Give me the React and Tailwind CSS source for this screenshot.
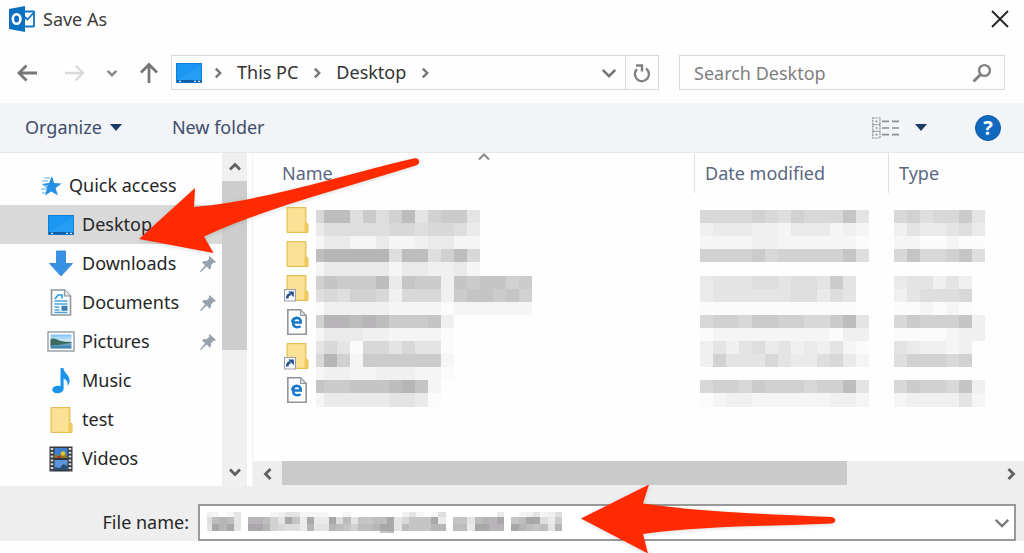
import React from "react";

const SHADES = {
  0: "#fbfbfb", 1: "#f5f5f5", 2: "#f0f0f0", 3: "#eaeaea", 4: "#e4e4e4", 5: "#dedede",
  6: "#d8d8d8", 7: "#d2d1d2", 8: "#cccbcc", 9: "#c6c5c6", a: "#bebdbe", b: "#b7b5b7", c: "#a9a7aa",
};

const NAME_CELLS = [
  "6aa5857a47884", "3555556656653", "1331131123311", "abbbbb5aa57a6", "1333331332231",
  "79888a39882989978", "56577626662899897", "02222211110111111", "7bbaba88892", "13332211110",
  "46406646440", "6b718888881", "12211222110", "988999ab91", "1333334430",
];
const DATE_CELLS = [
  "6666765766694", "2333221333121", "1111221111110", "7777867777795", ".............",
  "344455455484", "344444455354", "000000000000", "67768877668a4", "0111111111022",
  "2424534232410", "2744464335631", ".............", "67768777677a4", "0122111111221",
];
const TYPE_CELLS = [
  "6756684", "2433453", "1100100", "6966795", ".......",
  "344242", "245556", "001010", "6877792", "0000122",
  "432212", "577767", ".......", "6877692", "1222241",
];
const FILE_CELLS = [
  "21.14....12441111..1.......241.15.......3..124125",
  "5aba4.bba74c93c33c5a499aac46999c3.994abbc.9acc538",
  "4cbc4.ccb76553b44ba97aabcc4a999bb.aa3ccbb.cba9a4b",
  "........................9a",
];

function Mosaic({ rows, first, cell, tops, className, label }) {
  const cols = Math.max(...rows.map((r) => r.length));
  const width = first + (cols - 1) * cell;
  const height = tops[tops.length - 1];
  return (
    <svg width={width} height={height} viewBox={`0 0 ${width} ${height}`} className={className} role="img" aria-label={label} shapeRendering="crispEdges">
      {rows.map((row, r) =>
        [...row].map((c, i) =>
          c === "." ? null : (
            <rect
              key={`${r}-${i}`}
              x={i === 0 ? 0 : first + (i - 1) * cell}
              y={tops[r]}
              width={i === 0 ? first : cell}
              height={tops[r + 1] - tops[r]}
              fill={SHADES[c]}
            />
          )
        )
      )}
    </svg>
  );
}

const LIST_TOPS = Array.from({ length: 16 }, (_, i) => Math.round(i * 13.1));

function Chevron({ dir, size = 16, color = "#606060", width = 2.8, className = "" }) {
  const paths = {
    down: "M3 5.5 L8 10.5 L13 5.5",
    up: "M3 10.5 L8 5.5 L13 10.5",
    right: "M5.5 3 L10.5 8 L5.5 13",
    left: "M10.5 3 L5.5 8 L10.5 13",
  };
  return (
    <svg width={size} height={size} viewBox="0 0 16 16" fill="none" stroke={color} strokeWidth={width} className={`shrink-0 ${className}`} aria-hidden="true">
      <path d={paths[dir]} />
    </svg>
  );
}

const OutlookIcon = () => (
  <svg width="28" height="28" viewBox="0 0 28 28" aria-hidden="true">
    <rect x="14" y="6.5" width="12" height="15" rx="0.5" fill="#fff" stroke="#1273c4" strokeWidth="1.8" />
    <path d="M15 10.5 L19.5 14.5 L26 7.5" fill="none" stroke="#1273c4" strokeWidth="1.8" />
    <path d="M1 4 L17 1 V27 L1 24 Z" fill="#0b6fc2" />
    <ellipse cx="8.6" cy="14" rx="3.8" ry="4.8" fill="none" stroke="#fff" strokeWidth="2.6" />
  </svg>
);

const MonitorIcon = () => (
  <svg width="28" height="22" viewBox="0 0 28 22" aria-hidden="true">
    <rect x="1" y="1" width="26" height="20" fill="#1180d8" />
    <rect x="2" y="2" width="24" height="16" fill="#1a97f2" />
    <path d="M2 18 L26 4 V18 Z" fill="#2ba2f6" opacity="0.6" />
    <rect x="2" y="18" width="24" height="2.5" fill="#0b5fa8" />
    <path d="M4 19.3 H6 M19 19.3 H21 M23 19.3 H25" stroke="#d7ecfb" strokeWidth="1.2" />
  </svg>
);

const StarIcon = () => (
  <svg width="24" height="22" viewBox="0 0 24 22" aria-hidden="true">
    <path d="M14 1 L16 8 L23.5 8.5 L17.6 13 L20 20.5 L13.3 16.4 L7 20.5 L9 13 L4 9 L11 8 Z" fill="#2490e3" />
    <path d="M6 3 H12 M4 6 H10 M6 11 H10 M3 14 H9 M4 18 H8" stroke="#8fc9f4" strokeWidth="1.4" />
  </svg>
);

const DownloadIcon = () => (
  <svg width="26" height="27" viewBox="0 0 26 27" aria-hidden="true">
    <path d="M8.5 1 H17.5 V13.5 H24.5 L13 26 L1.5 13.5 H8.5 Z" fill="#3792e6" stroke="#2a7fd0" strokeWidth="0.8" />
  </svg>
);

const DocumentIcon = () => (
  <svg width="22" height="27" viewBox="0 0 22 27" aria-hidden="true">
    <path d="M1.5 1 H14.5 L20.5 7 V26 H1.5 Z" fill="#fbfcfd" stroke="#8f959b" strokeWidth="1.6" />
    <path d="M14.5 1 V7 H20.5" fill="#e3e6e9" stroke="#8f959b" strokeWidth="1.2" />
    <path d="M5 10 L8 6 H12 V9.5" fill="none" stroke="#2e9be0" strokeWidth="1.7" />
    <path d="M4.5 12 H17.5 M4.5 15 H17.5 M4.5 18 H9.5 M4.5 21 H9.5 M4.5 23.5 H17.5" stroke="#49a4dc" strokeWidth="1.4" />
    <rect x="11.5" y="16.8" width="6" height="5" fill="#3a7fb0" />
  </svg>
);

const PictureIcon = () => (
  <svg width="28" height="21" viewBox="0 0 28 21" aria-hidden="true">
    <defs>
      <linearGradient id="sky" x1="0" y1="0" x2="0" y2="1">
        <stop offset="0" stopColor="#7fc0f0" />
        <stop offset="1" stopColor="#e6f5fc" />
      </linearGradient>
      <linearGradient id="sea" x1="0" y1="0" x2="0" y2="1">
        <stop offset="0" stopColor="#8cc0d8" />
        <stop offset="1" stopColor="#2f74a6" />
      </linearGradient>
    </defs>
    <rect x="1" y="1" width="26" height="19" fill="#fff" stroke="#9aa4ab" strokeWidth="1.5" />
    <rect x="3.5" y="3.5" width="21" height="8" fill="url(#sky)" />
    <rect x="3.5" y="11" width="21" height="6.5" fill="url(#sea)" />
    <path d="M3.5 8 C7 6.5 10 8.5 13 9.8 C17 10.8 21 10.8 24.5 11 V12 C17 13 12 14 3.5 14.5 Z" fill="#3f6a5e" />
  </svg>
);

const MusicIcon = () => (
  <svg width="20" height="27" viewBox="0 0 20 27" aria-hidden="true">
    <path d="M9.5 1 H12.4 C12.8 6 19 8 18.6 14 C18.5 16 17.6 18 16.5 19 C17.3 15.5 16 13 12.6 11.6 V22 C12.4 25 8.5 26.6 5.5 26.3 C2.5 26 1 24 1.2 22.2 C1.6 19.5 6 18 9.5 19.2 Z" fill="#1a93ec" />
  </svg>
);

const FolderIcon = ({ shortcut }) => (
  <svg width="26" height="28" viewBox="0 0 26 28" aria-hidden="true">
    <path d="M3 1.5 H22 V16.5 L24 18 V26.5 H3 Z" fill="#f4d679" stroke="#e2bd55" strokeWidth="1" />
    <path d="M4 2.5 H20.5 V25.5 H4 Z" fill="#fae195" />
    <path d="M20.5 26 V18 L22 16.5 L24 18 V26 Z" fill="#f0ca5c" />
    {shortcut && (
      <g>
        <rect x="0.5" y="15.5" width="11" height="11.5" fill="#f7f8fa" stroke="#9a9fa8" strokeWidth="1" />
        <path d="M3.2 24.5 C3.2 21.5 4.5 20.5 6.6 20.3" fill="none" stroke="#23518f" strokeWidth="2.4" />
        <path d="M4.2 17.6 H9.8 V23.2 Z" fill="#23518f" />
      </g>
    )}
  </svg>
);

const WebFileIcon = () => (
  <svg width="26" height="28" viewBox="0 0 26 28" aria-hidden="true">
    <path d="M3.8 1.8 H16.5 L22.2 7.5 V26.2 H3.8 Z" fill="#fdfdfe" stroke="#90959b" strokeWidth="1.6" />
    <path d="M16.5 1.8 V7.5 H22.2 Z" fill="#dcdfe2" stroke="#90959b" strokeWidth="1" />
    <path d="M9.5 14.6 H16.8 C16.8 11.4 15 9.9 13 9.9 C10.6 9.9 9 11.8 9 14.6 C9 17.6 10.8 19.2 13.4 19.2 C14.6 19.2 15.7 18.9 16.6 18.3" fill="none" stroke="#1878cc" strokeWidth="2.5" />
    <path d="M7.6 14 C8.2 11 10.4 9.4 13 9.3" fill="none" stroke="#1878cc" strokeWidth="1.6" />
  </svg>
);

const VideoIcon = () => (
  <svg width="24" height="26" viewBox="0 0 24 26" aria-hidden="true">
    <rect x="0.5" y="0.5" width="23" height="25" fill="#33363c" />
    <path d="M3 2 V25 M21 2 V25" stroke="#dcdcdc" strokeWidth="2.6" strokeDasharray="2 1.8" />
    <rect x="5.5" y="2" width="13" height="10" fill="#3f7fd2" />
    <path d="M5.5 12 V8 L10 10 L13 6 L17 8 L18.5 12 Z" fill="#8c7a22" />
    <circle cx="14" cy="7.5" r="2.2" fill="#e3c52e" />
    <path d="M8 10 H12 V12 H8 Z" fill="#b2352c" />
    <rect x="5.5" y="14" width="13" height="10" fill="#5b93dd" />
    <path d="M5.5 24 V21 L11 22 L14 18 L18.5 20 V24 Z" fill="#2c4d74" />
  </svg>
);

const PinIcon = () => (
  <svg width="18" height="18" viewBox="0 0 18 18" aria-hidden="true">
    <path d="M10.5 1 L17 7 L15.3 8 L14.6 7.6 L12 10.6 C12.4 12.3 12 13.6 11 14.8 L7.6 11.6 L1.8 17.2 L1 16.5 L6 10.2 L3 7.2 C4.4 6 6 5.8 7.6 6.3 L10.4 3.5 L9.8 2.4 Z" fill="#97a2ac" />
  </svg>
);

const TREE = [
  { label: "Desktop", icon: <MonitorIcon />, selected: true },
  { label: "Downloads", icon: <DownloadIcon />, pinned: true },
  { label: "Documents", icon: <DocumentIcon />, pinned: true },
  { label: "Pictures", icon: <PictureIcon />, pinned: true },
  { label: "Music", icon: <MusicIcon /> },
  { label: "test", icon: <FolderIcon /> },
  { label: "Videos", icon: <VideoIcon /> },
];

const FILES = ["folder", "folder", "shortcut", "web", "shortcut", "web"];

function TitleBar() {
  return (
    <header className="flex h-[38px] items-center justify-between pl-2 pr-[11px]">
      <div className="flex items-center gap-[7px]">
        <OutlookIcon />
        <h1 className="text-[18px] leading-6 text-[#3c3c3c]">Save As</h1>
      </div>
      <button type="button" aria-label="Close" className="p-1">
        <svg width="18" height="18" viewBox="0 0 18 18" fill="none" stroke="#222" strokeWidth="1.8" aria-hidden="true">
          <path d="M1 1 L17 17 M17 1 L1 17" />
        </svg>
      </button>
    </header>
  );
}

function NavBar() {
  return (
    <nav className="flex items-center pb-[13px] pl-[17px] pr-[19px] pt-[17px]">
      <button type="button" aria-label="Back" className="w-[40px]">
        <svg width="20" height="18" viewBox="0 0 20 18" fill="none" stroke="#777" strokeWidth="2.8" aria-hidden="true">
          <path d="M20 9 H2 M9.5 1.5 L2 9 L9.5 16.5" />
        </svg>
      </button>
      <button type="button" aria-label="Forward" className="ml-2 w-[40px]">
        <svg width="20" height="18" viewBox="0 0 20 18" fill="none" stroke="#dadada" strokeWidth="2.4" aria-hidden="true">
          <path d="M0 9 H18 M10.5 1.5 L18 9 L10.5 16.5" />
        </svg>
      </button>
      <button type="button" aria-label="Recent locations" className="w-[34px]">
        <Chevron dir="down" size={14} color="#8a8a8a" />
      </button>
      <button type="button" aria-label="Up" className="w-[32px]">
        <svg width="20" height="21" viewBox="0 0 20 21" fill="none" stroke="#777" strokeWidth="2.8" aria-hidden="true">
          <path d="M10 21 V2.5 M2 10.5 L10 2.5 L18 10.5" />
        </svg>
      </button>
      <div className="flex h-[35px] w-0 grow-[486] items-stretch border border-[#d9d9d9] text-[18px] text-[#333]">
        <div className="flex grow items-center pl-[3px]">
          <MonitorIcon />
          <Chevron dir="right" size={14} color="#777" className="ml-2" />
          <a href="#this-pc" className="ml-3">This PC</a>
          <Chevron dir="right" size={14} color="#777" className="ml-3" />
          <a href="#desktop" className="ml-3">Desktop</a>
          <Chevron dir="right" size={14} color="#777" className="ml-3" />
        </div>
        <button type="button" aria-label="Previous locations" className="flex w-[32px] items-center justify-center">
          <Chevron dir="down" size={20} color="#777" width={2.2} />
        </button>
        <button type="button" aria-label="Refresh" className="flex w-[33px] items-center justify-center border-l border-[#d9d9d9]">
          <svg width="18" height="20" viewBox="0 0 18 20" fill="none" stroke="#808080" strokeWidth="2.4" aria-hidden="true">
            <path d="M13 5.5 A7 7 0 1 1 4 6.2" />
            <path d="M3 2.5 H9 V8.5" />
          </svg>
        </button>
      </div>
      <div className="ml-5 flex h-[35px] w-0 grow-[298] items-center border border-[#d9d9d9] pl-[14px] pr-3">
        <input
          type="search"
          aria-label="Search Desktop"
          placeholder="Search Desktop"
          className="w-0 grow bg-transparent text-[18px] leading-6 outline-none placeholder:text-[#808080]"
        />
        <svg width="20" height="20" viewBox="0 0 20 20" fill="none" stroke="#808080" aria-hidden="true">
          <circle cx="12.5" cy="7.5" r="5.4" strokeWidth="2.4" />
          <path d="M8.5 11.5 L1.5 18.5" strokeWidth="3" />
        </svg>
      </div>
    </nav>
  );
}

const Triangle = () => (
  <svg width="12" height="7" viewBox="0 0 12 7" aria-hidden="true">
    <path d="M0 0 H12 L6 7 Z" fill="#1c3a66" />
  </svg>
);

function Toolbar() {
  return (
    <div className="flex h-[50px] items-center border-b border-[#e6e7e9] bg-[#f2f4f7] pl-[25px] pr-[23px] text-[18px] text-[#3f4d6b]">
      <button type="button" className="flex items-center gap-2">
        Organize <Triangle />
      </button>
      <button type="button" className="ml-[50px]">New folder</button>
      <button type="button" aria-label="Change view" className="ml-auto flex items-center gap-4">
        <svg width="27" height="22" viewBox="0 0 27 22" fill="none" stroke="#8b8f95" aria-hidden="true">
          <path d="M0.8 1 H8 V21 H0.8 Z M0.8 7.6 H8 M0.8 14.3 H8" strokeWidth="1.2" strokeDasharray="2 0.8" />
          <path d="M3.6 4.4 H5.4 M3.6 11 H5.4 M3.6 17.6 H5.4" strokeWidth="1.6" />
          <path d="M10 4.4 H17 M20 4.4 H27 M10 11 H17 M20 11 H27 M10 17.6 H17 M20 17.6 H27" strokeWidth="1.7" />
        </svg>
        <Triangle />
      </button>
      <button type="button" aria-label="Help" className="ml-12 flex size-[26px] items-center justify-center rounded-full border border-[#0a59a8] bg-[#0f6ac0] text-[20px] font-bold leading-6 text-white">
        ?
      </button>
    </div>
  );
}

function Sidebar() {
  return (
    <aside className="flex w-[253px] shrink-0 border-r border-[#f3f3f3]">
      <ul className="grow pb-2 pt-[13px] text-[18px] text-[#262626]">
        <li>
          <a href="#quick-access" className="flex h-[39px] items-center gap-[7px] pl-[38px]">
            <StarIcon />
            Quick access
          </a>
        </li>
        {TREE.map((t) => (
          <li key={t.label}>
            <a href={`#${t.label.toLowerCase()}`} className={`flex h-[39px] items-center pl-[46px] pr-[5px] ${t.selected ? "bg-[#d9d9d9]" : ""}`}>
              <span className="flex w-[30px] shrink-0 justify-center">{t.icon}</span>
              <span className="ml-[6px] grow">{t.label}</span>
              {t.pinned && <PinIcon />}
            </a>
          </li>
        ))}
      </ul>
      <div className="mr-[5px] flex w-[25px] flex-col bg-[#f0f0f0]">
        <button type="button" aria-label="Scroll up" className="flex h-[28px] items-center justify-center">
          <Chevron dir="up" />
        </button>
        <div className="grow-[168] bg-[#cdcdcd]" />
        <div className="grow-[108]" />
        <button type="button" aria-label="Scroll down" className="flex h-[28px] items-center justify-center">
          <Chevron dir="down" />
        </button>
      </div>
    </aside>
  );
}

function FileList() {
  return (
    <main className="flex min-w-0 grow flex-col">
      <table className="w-full table-fixed border-collapse text-left text-[18px] text-[#5a6782]">
        <colgroup>
          <col className="w-[63px]" />
          <col className="w-[378px]" />
          <col className="w-[194px]" />
          <col />
        </colgroup>
        <thead>
          <tr>
            <th colSpan={2} className="p-0 pb-[10px] align-top font-normal">
              <div className="relative flex h-10 items-center pl-[29px]">
                Name
                <Chevron dir="up" color="#8a8a8a" width={2} className="absolute left-[223px] top-[-4px]" />
              </div>
            </th>
            <th className="p-0 pb-[10px] align-top font-normal">
              <div className="flex h-10 items-center border-l border-[#e0e0e0] pl-[10px]">Date modified</div>
            </th>
            <th className="p-0 pb-[10px] align-top font-normal">
              <div className="flex h-10 items-center border-l border-[#e0e0e0] pl-[10px]">Type</div>
            </th>
          </tr>
        </thead>
        <tbody>
          {FILES.map((kind, i) => (
            <tr key={i} className="h-[34px]">
              <td className="p-0 pl-[31px]">
                {kind === "web" ? <WebFileIcon /> : <FolderIcon shortcut={kind === "shortcut"} />}
              </td>
              {i === 0 && (
                <>
                  <td rowSpan={6} className="p-0 pt-[7px] align-top">
                    <Mosaic rows={NAME_CELLS} first={8} cell={13} tops={LIST_TOPS} label="Redacted names" className="block" />
                  </td>
                  <td rowSpan={6} className="p-0 pl-[6px] pt-[7px] align-top">
                    <Mosaic rows={DATE_CELLS} first={13} cell={13} tops={LIST_TOPS} label="Redacted dates" className="block" />
                  </td>
                  <td rowSpan={6} className="p-0 pl-[6px] pt-[7px] align-top">
                    <Mosaic rows={TYPE_CELLS} first={13} cell={13} tops={LIST_TOPS} label="Redacted types" className="block" />
                  </td>
                </>
              )}
            </tr>
          ))}
        </tbody>
      </table>
      <div className="mt-auto flex h-[25px] bg-[#eeeeee]">
        <button type="button" aria-label="Scroll left" className="flex w-[29px] items-center justify-center">
          <Chevron dir="left" />
        </button>
        <div className="grow-[565] border-b border-[#eeeeee] bg-[#cacaca]" />
        <div className="grow-[150]" />
        <button type="button" aria-label="Scroll right" className="flex w-[27px] items-center justify-center">
          <Chevron dir="right" />
        </button>
      </div>
    </main>
  );
}

function FileNameBar() {
  return (
    <div className="flex items-center bg-[#eeeeee] pr-2 pt-[18px] text-[18px] text-[#262626]">
      <label htmlFor="file-name" className="w-[198px] shrink-0 pr-[9px] text-right">File name:</label>
      <div className="relative flex h-[37px] grow items-center border-2 border-[#999] bg-white">
        <input id="file-name" type="text" className="h-full w-full bg-transparent pl-2 outline-none" />
        <Mosaic rows={FILE_CELLS} first={5} cell={7.3} tops={[0, 5, 12, 19, 21]} label="Redacted file name" className="pointer-events-none absolute left-[7px] top-[6px]" />
        <Chevron dir="down" size={20} color="#777" width={1.8} className="pointer-events-none absolute right-[2px]" />
      </div>
    </div>
  );
}

function Arrows() {
  return (
    <>
      <svg width="290" height="106" viewBox="134 154 290 106" className="pointer-events-none absolute left-[134px] top-[154px] drop-shadow-sm" aria-hidden="true">
        <path d="M139 239 L195 188 L194 207 C270 200 345 174 414.5 158.3 C419.5 157.3 421 163.8 416.5 165.2 C345 188 265 208 204 236.5 L213.5 253 Z" fill="#ff2a00" />
      </svg>
      <svg width="262" height="72" viewBox="578 481 262 72" className="pointer-events-none absolute left-[578px] top-[481px] drop-shadow-sm" aria-hidden="true">
        <path d="M581 518.5 L649 484.5 L643 503.5 C700 512 765 514 831.5 517 C836.5 517.5 836.5 523.3 831.5 523.5 C765 526.5 700 526 643 534 L648 553.5 Z" fill="#ff2a00" />
      </svg>
    </>
  );
}

export default function App() {
  return (
    <div className="relative flex min-h-screen flex-col overflow-hidden bg-[#fefefe] font-['Noto_Sans','Open_Sans',sans-serif]">
      <TitleBar />
      <NavBar />
      <Toolbar />
      <div className="flex">
        <Sidebar />
        <FileList />
      </div>
      <FileNameBar />
      <Arrows />
    </div>
  );
}
